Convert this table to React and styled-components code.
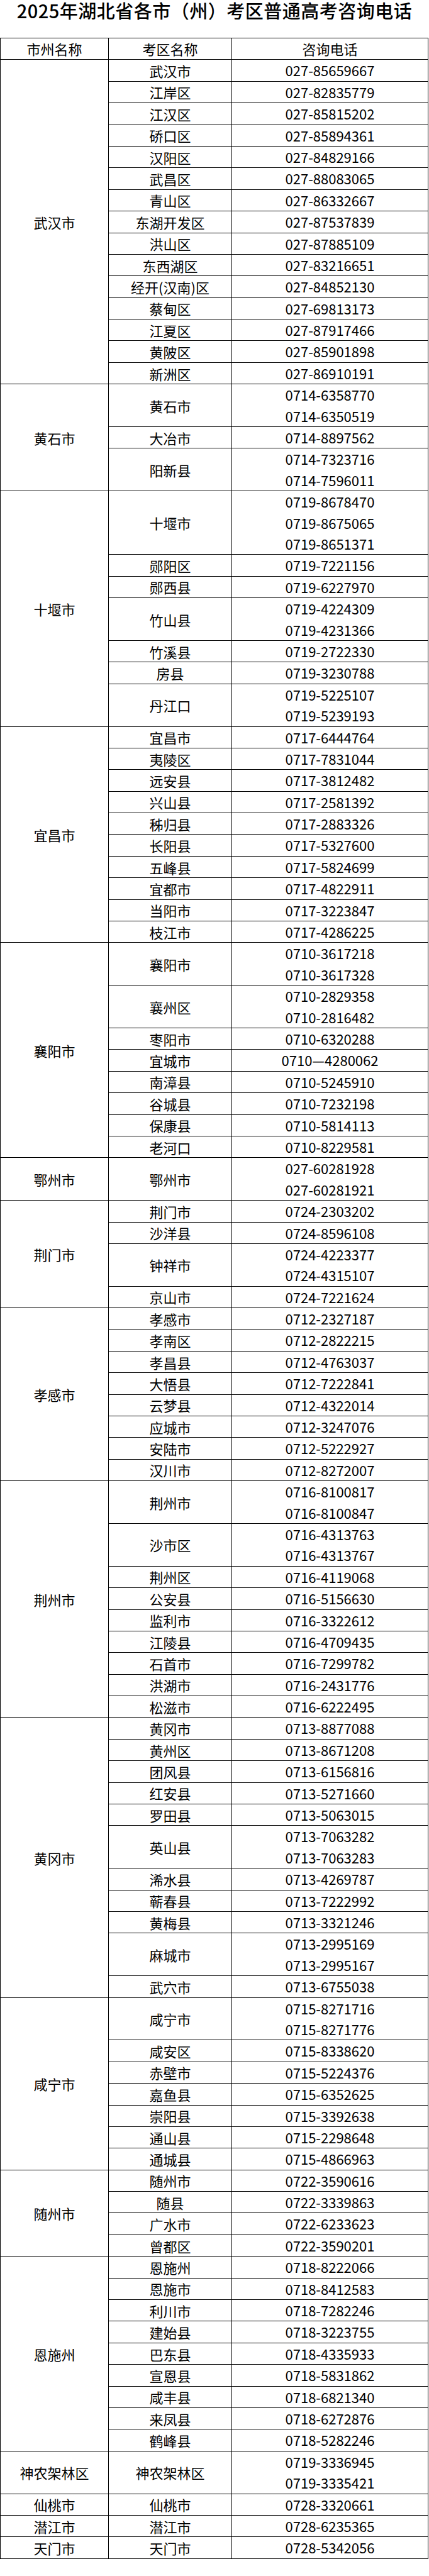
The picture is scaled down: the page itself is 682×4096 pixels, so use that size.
import styled, { createGlobalStyle } from 'styled-components'

const GlobalStyle = createGlobalStyle`
  body {
    margin: 0;
    background: #ffffff;
  }
`

const Page = styled.div`
  width: 682px;
  font-family: "Noto Sans CJK SC", "Noto Sans", sans-serif;
  color: #000;
`

const Title = styled.h1`
  margin: 0 0 27px;
  height: 33px;
  line-height: 33px;
  font-size: 29px;
  font-weight: 500;
  text-align: center;
  letter-spacing: 0.5px;
  white-space: nowrap;
`

const Table = styled.table`
  width: 681px;
  table-layout: fixed;
  border-collapse: collapse;
  font-size: 22px;
`

const Cell = styled.td`
  border: 1px solid #000;
  padding: 0;
  text-align: center;
  vertical-align: middle;
  white-space: nowrap;
`

const HeadCell = styled(Cell).attrs({ as: 'th' })`
  font-weight: 400;
  height: 33.4px;
  line-height: 33.4px;
`

const Line = styled.div`
  height: 33.4px;
  line-height: 33.4px;
`

const data = [
  ['武汉市', [
    ['武汉市', ['027-85659667']],
    ['江岸区', ['027-82835779']],
    ['江汉区', ['027-85815202']],
    ['硚口区', ['027-85894361']],
    ['汉阳区', ['027-84829166']],
    ['武昌区', ['027-88083065']],
    ['青山区', ['027-86332667']],
    ['东湖开发区', ['027-87537839']],
    ['洪山区', ['027-87885109']],
    ['东西湖区', ['027-83216651']],
    ['经开(汉南)区', ['027-84852130']],
    ['蔡甸区', ['027-69813173']],
    ['江夏区', ['027-87917466']],
    ['黄陂区', ['027-85901898']],
    ['新洲区', ['027-86910191']],
  ]],
  ['黄石市', [
    ['黄石市', ['0714-6358770', '0714-6350519']],
    ['大冶市', ['0714-8897562']],
    ['阳新县', ['0714-7323716', '0714-7596011']],
  ]],
  ['十堰市', [
    ['十堰市', ['0719-8678470', '0719-8675065', '0719-8651371']],
    ['郧阳区', ['0719-7221156']],
    ['郧西县', ['0719-6227970']],
    ['竹山县', ['0719-4224309', '0719-4231366']],
    ['竹溪县', ['0719-2722330']],
    ['房县', ['0719-3230788']],
    ['丹江口', ['0719-5225107', '0719-5239193']],
  ]],
  ['宜昌市', [
    ['宜昌市', ['0717-6444764']],
    ['夷陵区', ['0717-7831044']],
    ['远安县', ['0717-3812482']],
    ['兴山县', ['0717-2581392']],
    ['秭归县', ['0717-2883326']],
    ['长阳县', ['0717-5327600']],
    ['五峰县', ['0717-5824699']],
    ['宜都市', ['0717-4822911']],
    ['当阳市', ['0717-3223847']],
    ['枝江市', ['0717-4286225']],
  ]],
  ['襄阳市', [
    ['襄阳市', ['0710-3617218', '0710-3617328']],
    ['襄州区', ['0710-2829358', '0710-2816482']],
    ['枣阳市', ['0710-6320288']],
    ['宜城市', ['0710—4280062']],
    ['南漳县', ['0710-5245910']],
    ['谷城县', ['0710-7232198']],
    ['保康县', ['0710-5814113']],
    ['老河口', ['0710-8229581']],
  ]],
  ['鄂州市', [
    ['鄂州市', ['027-60281928', '027-60281921']],
  ]],
  ['荆门市', [
    ['荆门市', ['0724-2303202']],
    ['沙洋县', ['0724-8596108']],
    ['钟祥市', ['0724-4223377', '0724-4315107']],
    ['京山市', ['0724-7221624']],
  ]],
  ['孝感市', [
    ['孝感市', ['0712-2327187']],
    ['孝南区', ['0712-2822215']],
    ['孝昌县', ['0712-4763037']],
    ['大悟县', ['0712-7222841']],
    ['云梦县', ['0712-4322014']],
    ['应城市', ['0712-3247076']],
    ['安陆市', ['0712-5222927']],
    ['汉川市', ['0712-8272007']],
  ]],
  ['荆州市', [
    ['荆州市', ['0716-8100817', '0716-8100847']],
    ['沙市区', ['0716-4313763', '0716-4313767']],
    ['荆州区', ['0716-4119068']],
    ['公安县', ['0716-5156630']],
    ['监利市', ['0716-3322612']],
    ['江陵县', ['0716-4709435']],
    ['石首市', ['0716-7299782']],
    ['洪湖市', ['0716-2431776']],
    ['松滋市', ['0716-6222495']],
  ]],
  ['黄冈市', [
    ['黄冈市', ['0713-8877088']],
    ['黄州区', ['0713-8671208']],
    ['团风县', ['0713-6156816']],
    ['红安县', ['0713-5271660']],
    ['罗田县', ['0713-5063015']],
    ['英山县', ['0713-7063282', '0713-7063283']],
    ['浠水县', ['0713-4269787']],
    ['蕲春县', ['0713-7222992']],
    ['黄梅县', ['0713-3321246']],
    ['麻城市', ['0713-2995169', '0713-2995167']],
    ['武穴市', ['0713-6755038']],
  ]],
  ['咸宁市', [
    ['咸宁市', ['0715-8271716', '0715-8271776']],
    ['咸安区', ['0715-8338620']],
    ['赤壁市', ['0715-5224376']],
    ['嘉鱼县', ['0715-6352625']],
    ['崇阳县', ['0715-3392638']],
    ['通山县', ['0715-2298648']],
    ['通城县', ['0715-4866963']],
  ]],
  ['随州市', [
    ['随州市', ['0722-3590616']],
    ['随县', ['0722-3339863']],
    ['广水市', ['0722-6233623']],
    ['曾都区', ['0722-3590201']],
  ]],
  ['恩施州', [
    ['恩施州', ['0718-8222066']],
    ['恩施市', ['0718-8412583']],
    ['利川市', ['0718-7282246']],
    ['建始县', ['0718-3223755']],
    ['巴东县', ['0718-4335933']],
    ['宣恩县', ['0718-5831862']],
    ['咸丰县', ['0718-6821340']],
    ['来凤县', ['0718-6272876']],
    ['鹤峰县', ['0718-5282246']],
  ]],
  ['神农架林区', [
    ['神农架林区', ['0719-3336945', '0719-3335421']],
  ]],
  ['仙桃市', [['仙桃市', ['0728-3320661']]]],
  ['潜江市', [['潜江市', ['0728-6235365']]]],
  ['天门市', [['天门市', ['0728-5342056']]]],
]

const App = () => (
  <Page>
    <GlobalStyle />
    <Title>2025年湖北省各市（州）考区普通高考咨询电话</Title>
    <Table>
      <colgroup>
        <col style={{ width: 172 }} />
        <col style={{ width: 196 }} />
        <col />
      </colgroup>
      <thead>
        <tr>
          <HeadCell>市州名称</HeadCell>
          <HeadCell>考区名称</HeadCell>
          <HeadCell>咨询电话</HeadCell>
        </tr>
      </thead>
      <tbody>
        {data.map(([city, areas]) =>
          areas.map(([area, phones], i) => (
            <tr key={city + area}>
              {i === 0 && <Cell rowSpan={areas.length}>{city}</Cell>}
              <Cell>{area}</Cell>
              <Cell>
                {phones.map((p) => (
                  <Line key={p}>{p}</Line>
                ))}
              </Cell>
            </tr>
          ))
        )}
      </tbody>
    </Table>
  </Page>
)

export default App
